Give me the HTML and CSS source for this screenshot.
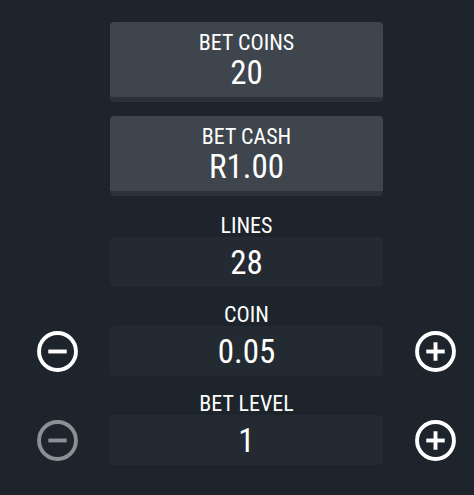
FILE: index.html
```html
<!DOCTYPE html>
<html>
<head>
<meta charset="utf-8">
<link rel="stylesheet" href="styles.css">
</head>
<body>
<div class="panel">
  <div class="card">
    <div class="card-label">BET COINS</div>
    <div class="card-value">20</div>
  </div>
  <div class="card">
    <div class="card-label">BET CASH</div>
    <div class="card-value">R1.00</div>
  </div>

  <div class="field">
    <div class="field-label">LINES</div>
    <div class="field-row">
      <span class="slot"></span>
      <div class="field-box">28</div>
      <span class="slot"></span>
    </div>
  </div>

  <div class="field">
    <div class="field-label">COIN</div>
    <div class="field-row">
      <span class="slot slot-left">
        <svg class="icon" viewBox="0 0 40 40"><circle cx="20" cy="20" r="18" fill="none" stroke="currentColor" stroke-width="3.8"/><rect x="11" y="18.1" width="18" height="3.8" fill="currentColor"/></svg>
      </span>
      <div class="field-box">0.05</div>
      <span class="slot slot-right">
        <svg class="icon" viewBox="0 0 40 40"><circle cx="20" cy="20" r="18" fill="none" stroke="currentColor" stroke-width="3.8"/><rect x="11" y="18.1" width="18" height="3.8" fill="currentColor"/><rect x="18.1" y="11" width="3.8" height="18" fill="currentColor"/></svg>
      </span>
    </div>
  </div>

  <div class="field">
    <div class="field-label">BET LEVEL</div>
    <div class="field-row">
      <span class="slot slot-left disabled">
        <svg class="icon" viewBox="0 0 40 40"><circle cx="20" cy="20" r="18" fill="none" stroke="currentColor" stroke-width="3.8"/><rect x="11" y="18.1" width="18" height="3.8" fill="currentColor"/></svg>
      </span>
      <div class="field-box">1</div>
      <span class="slot slot-right">
        <svg class="icon" viewBox="0 0 40 40"><circle cx="20" cy="20" r="18" fill="none" stroke="currentColor" stroke-width="3.8"/><rect x="11" y="18.1" width="18" height="3.8" fill="currentColor"/><rect x="18.1" y="11" width="3.8" height="18" fill="currentColor"/></svg>
      </span>
    </div>
  </div>
</div>
</body>
</html>
```

FILE: styles.css
```css
html, body {
  margin: 0;
  padding: 0;
  background: #1d242b;
}
body {
  width: 474px;
  height: 495px;
  overflow: hidden;
  font-family: "Roboto Condensed", "Liberation Sans Narrow", "Roboto", sans-serif;
  color: #ffffff;
}
.panel {
  display: flex;
  flex-direction: column;
  padding-top: 22px;
}
.card {
  box-sizing: border-box;
  margin-left: 110px;
  width: 273px;
  height: 80px;
  background: #3e454d;
  border-bottom: 5px solid #2a3138;
  border-radius: 4px;
  display: flex;
  flex-direction: column;
  align-items: center;
  padding-top: 9px;
}
.card + .card {
  margin-top: 14px;
}
.card-label {
  font-size: 22px;
  line-height: 24px;
}
.card-value {
  font-size: 33px;
  line-height: 36px;
  margin-top: 0;
}
.field {
  display: flex;
  flex-direction: column;
  margin-top: 19px;
}
.field + .field {
  margin-top: 17px;
}
.field-label {
  text-align: center;
  font-size: 22px;
  line-height: 22px;
  margin-left: 110px;
  width: 273px;
}
.field-row {
  display: grid;
  grid-template-columns: 110px 273px 91px;
  align-items: center;
}
.field-box {
  height: 50px;
  border-radius: 4px;
  background: #242a31;
  display: flex;
  align-items: center;
  justify-content: center;
  font-size: 33px;
}
.slot {
  display: flex;
  align-items: center;
  color: #ffffff;
}
.slot-left {
  padding-left: 37px;
}
.slot-right {
  padding-left: 32px;
}
.disabled {
  color: #8c8f93;
}
.icon {
  width: 41px;
  height: 41px;
  display: block;
}
```
